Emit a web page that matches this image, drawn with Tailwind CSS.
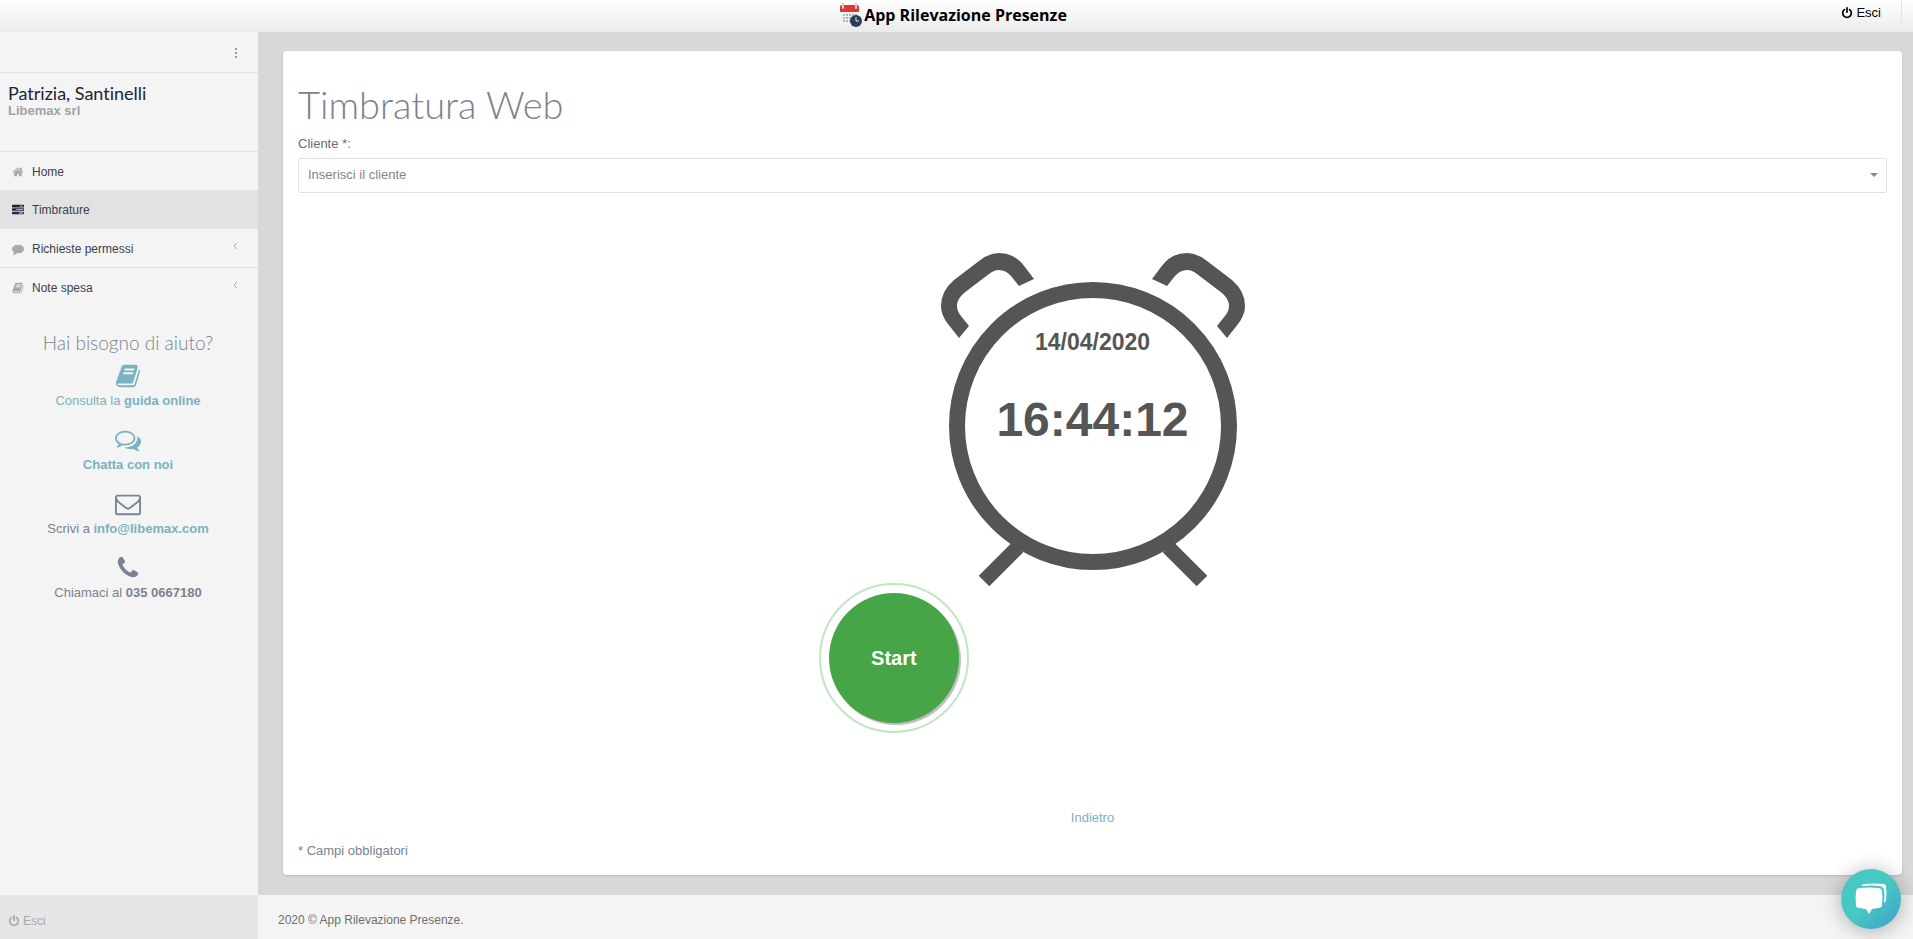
<!DOCTYPE html>
<html lang="it">

<head>
    <meta charset="UTF-8">
    <meta name="viewport" content="width=device-width, initial-scale=1">
    <title>App Rilevazione Presenze</title>
    <script src="https://cdn.jsdelivr.net/npm/@tailwindcss/browser@4"></script>
</head>

<body class="min-h-screen flex flex-col bg-[#d8d8d8] font-['Liberation_Sans',Arial,sans-serif] text-[13px] leading-5 text-[#7b8291]">

    <!-- Icons -->
    <svg class="hidden">
        <symbol id="home" viewBox="0 0 1792 1792"><path d="M1472 992v480q0 26-19 45t-45 19h-384v-384h-256v384h-384q-26 0-45-19t-19-45v-480q0-1 .5-3t.5-3l575-474 575 474q1 2 1 6zm223-69l-62 74q-8 9-21 11h-3q-13 0-21-7l-692-577-692 577q-12 8-24 7-13-2-21-11l-62-74q-8-10-7-23.5t11-21.5l719-599q32-26 76-26t76 26l244 204v-195q0-14 9-23t23-9h192q14 0 23 9t9 23v408l219 182q10 8 11 21.5t-7 23.5z"/></symbol>
        <symbol id="tasks" viewBox="0 0 1792 1792"><path fill-rule="evenodd" d="M64 128h1664q64 0 64 64v256q0 64-64 64H64q-64 0-64-64V192q0-64 64-64zM1152 256v128h512V256zM64 640h1664q64 0 64 64v256q0 64-64 64H64q-64 0-64-64V704q0-64 64-64zM640 768v128h1024V768zM64 1152h1664q64 0 64 64v256q0 64-64 64H64q-64 0-64-64v-256q0-64 64-64zM1024 1280v128h640v-128z"/></symbol>
        <symbol id="comment" viewBox="0 0 1792 1792"><path d="M1792 896q0 174-120 321.5t-326 233-450 85.5q-70 0-145-8-198 175-460 242-49 14-114 22-17 2-30.5-9t-17.5-29v-1q-3-4-.5-12t2-10 4.5-9.5l6-9 7-8.5 8-9q7-8 31-34.5t34.5-38 31-39.5 32.5-51 27-59 26-76q-157-89-247.5-220t-90.5-281q0-130 71-248.5t191-204.5 286-136.5 348-50.5q244 0 450 85.5t326 233 120 321.5z"/></symbol>
        <symbol id="book" viewBox="0 0 1792 1792"><path d="M1703 478q40 57 18 129l-275 906q-19 64-76.5 107.5t-122.5 43.5h-923q-77 0-148.5-53.5t-99.5-131.5q-24-67-2-127 0-4 3-27t4-37q1-8-3-21.5t-3-19.5q2-11 8-21t16.5-23.5 16.5-23.5q23-38 45-91.5t30-91.5q3-10 .5-30t-.5-28q3-11 17-28t17-23q21-36 42-92t25-90q1-9-2.5-32t.5-28q4-13 22-30.5t22-22.5q19-26 42.5-84.5t27.5-96.5q1-8-3-25.5t-2-26.5q2-8 9-18t18-23 17-21q8-12 16.5-30.5t15-35 16-36 19.5-32 26.5-23.5 36-11.5 47.5 5.5l-1 3q38-9 51-9h761q74 0 114 56t18 130l-274 906q-36 119-71.5 153.5t-128.5 34.5h-869q-27 0-38 15-11 16-1 43 24 70 144 70h923q29 0 56-15.5t35-41.5l300-987q7-22 5-57 38 15 59 43zm-1064 2q-4 13 2 22.5t20 9.5h608q13 0 25.5-9.5t16.5-22.5l21-64q4-13-2-22.5t-20-9.5h-608q-13 0-25.5 9.5t-16.5 22.5zm-83 256q-4 13 2 22.5t20 9.5h608q13 0 25.5-9.5t16.5-22.5l21-64q4-13-2-22.5t-20-9.5h-608q-13 0-25.5 9.5t-16.5 22.5z"/></symbol>
        <symbol id="comments" viewBox="0 0 1792 1792"><path d="M704 384q-153 0-286 52t-211.5 141-78.5 191q0 82 53 158t149 132l97 56-35 84q34-20 62-39l44-31 53 10q78 14 153 14 153 0 286-52t211.5-141 78.5-191-78.5-191-211.5-141-286-52zm0-128q191 0 353.5 68.5t256.5 186.5 94 257-94 257-256.5 186.5-353.5 68.5q-86 0-176-16-124 88-278 128-36 9-86 16h-3q-11 0-20.5-8t-11.5-21q-1-3-1-6.5t.5-6.5 2-6l2.5-5 3.5-5.5 4-5 4.5-5 4-4.5q5-6 23-25t26-29.5 22.5-29 25-38.5 20.5-44q-124-72-195-177t-71-224q0-139 94-257t256.5-186.5 353.5-68.5zm822 1169q10 24 20.5 44t25 38.5 22.5 29 26 29.5 23 25q1 1 4 4.5t4.5 5 4 5 3.5 5.5l2.5 5 2 6 .5 6.5-1 6.5q-3 14-13 22t-22 7q-50-7-86-16-154-40-278-128-90 16-176 16-271 0-472-132 58 4 88 4 161 0 309-45t264-129q125-92 192-212t67-254q0-77-23-152 129 71 204 178t75 230q0 120-71 224.5t-195 176.5z"/></symbol>
        <symbol id="envelope" viewBox="0 0 1792 1792"><path d="M1664 1504v-768q-32 36-69 66-268 206-426 338-51 43-83 67t-86.5 48.5-102.5 24.5h-2q-48 0-102.5-24.5t-86.5-48.5-83-67q-158-132-426-338-37-30-69-66v768q0 13 9.5 22.5t22.5 9.5h1472q13 0 22.5-9.5t9.5-22.5zm0-1051v-24.5l-.5-13-3-12.5-5.5-9-9-7.5-14-2.5h-1472q-13 0-22.5 9.5t-9.5 22.5q0 168 147 284 193 152 401 317 6 5 35 29.5t46 37.5 44.5 31.5 50.5 27.5 43 9h2q20 0 43-9t50.5-27.5 44.5-31.5 46-37.5 35-29.5q208-165 401-317 54-43 100.5-115.5t46.5-131.5zm128-37v1088q0 66-47 113t-113 47h-1472q-66 0-113-47t-47-113v-1088q0-66 47-113t113-47h1472q66 0 113 47t47 113z"/></symbol>
        <symbol id="phone" viewBox="0 0 1792 1792"><path d="M1600 1240q0 27-10 70.5t-21 68.5q-21 50-122 106-94 51-186 51-27 0-53-3.5t-57.5-12.5-47-14.5-55.5-20.5-49-18q-98-35-175-83-127-79-264-216t-216-264q-48-77-83-175-3-9-18-49t-20.5-55.5-14.5-47-12.5-57.5-3.5-53q0-92 51-186 56-101 106-122 25-11 68.5-21t70.5-10q14 0 21 3 18 6 53 76 11 19 30 54t35 63.5 31 53.5q3 4 17.5 25t21.5 35.5 7 28.5q0 20-28.5 50t-62 55-62 53-28.5 46q0 9 5 22.5t8.5 20.5 14 24 11.5 19q76 137 174 235t235 174q2 1 19 11.5t24 14 20.5 8.5 22.5 5q18 0 46-28.5t53-62 55-62 50-28.5q14 0 28.5 7t35.5 21.5 25 17.5q25 15 53.5 31t63.5 35 54 30q70 35 76 53 3 7 3 21z"/></symbol>
        <symbol id="power" viewBox="0 0 1792 1792"><path d="M1664 896q0 156-61 298t-164 245-245 164-298 61-298-61-245-164-164-245-61-298q0-182 80.5-343t226.5-270q43-32 95.5-25t83.5 50q32 42 24.5 94.5t-49.5 84.5q-98 74-151.5 181t-53.5 228q0 104 40.5 198.5t109.5 163.5 163.5 109.5 198.5 40.5 198.5-40.5 163.5-109.5 109.5-163.5 40.5-198.5q0-121-53.5-228t-151.5-181q-42-32-49.5-84.5t24.5-94.5q31-43 84-50t95 25q146 109 226.5 270t80.5 343zm-640-768v640q0 52-38 90t-90 38-90-38-38-90v-640q0-52 38-90t90-38 90 38 38 90z"/></symbol>
        <symbol id="angle" viewBox="0 0 6 8"><path d="M5 1L2 4l3 3" fill="none" stroke="currentColor"/></symbol>
    </svg>

    <header class="h-8 grid grid-cols-[1fr_auto_1fr] items-start bg-linear-to-b from-white to-[#ebebeb] text-black">
        <div></div>
        <div class="flex items-center pt-[3px] pr-2 gap-[2px]">
            <svg class="size-6" viewBox="0 0 24 24">
                <path d="M2 5h19v17H4q-2 0-2-2z" fill="#f1f2f2"/>
                <path d="M2 4q0-2 2-2h15q2 0 2 2v5H2z" fill="#e0392f"/>
                <path d="M5 0v5M18 0v5" stroke="#c9d3d8" stroke-width="2" stroke-linecap="round"/>
                <path d="M5 12h14M5 15h14M5 18h10" stroke="#aeb4ba" stroke-width="2" stroke-dasharray="2 1"/>
                <circle cx="18" cy="18" r="6" fill="#2c3e55"/>
                <path d="M18 14v4h3" stroke="#dfe6ea" fill="none"/>
            </svg>
            <span class="font-['Open_Sans',sans-serif] font-bold text-base leading-5">App Rilevazione Presenze</span>
        </div>
        <div class="flex justify-end">
            <a href="#" class="flex items-center gap-[3px] pr-5 mr-[11px] h-[26px] border-r border-[#e4e4e4]">
                <svg class="size-3" fill="currentColor"><use href="#power"/></svg>
                Esci
            </a>
        </div>
    </header>

    <div class="flex-1 flex">
        <aside class="w-[258px] shrink-0 flex flex-col bg-[#f4f4f4]">
            <div class="h-[41px] flex items-center justify-end pr-[21px] pt-[2px] border-b border-[#e2e2e2]">
                <button type="button" aria-label="Menu" class="flex flex-col gap-[2px]">
                    <span class="size-[2px] bg-[#999]"></span>
                    <span class="size-[2px] bg-[#999]"></span>
                    <span class="size-[2px] bg-[#999]"></span>
                </button>
            </div>
            <div class="h-[79px] px-2 pt-[10px] border-b border-[#e2e2e2]">
                <h2 class="font-[Lato,sans-serif] text-lg leading-5 text-[#22233a] [font-variant-ligatures:none]">Patrizia, Santinelli</h2>
                <p class="font-bold leading-4 text-[#a1a1a1]">Libemax srl</p>
            </div>

            <nav class="text-xs text-[#3c3f4e]">
                <a href="#" class="h-[38px] flex items-center gap-2 px-3 pt-[2px]">
                    <svg class="size-3 text-[#a9a9a9]" fill="currentColor"><use href="#home"/></svg>
                    Home
                </a>
                <a href="#" class="h-[39px] flex items-center gap-2 px-3 bg-[#e2e2e2]">
                    <svg class="size-3 text-[#22233a]" fill="currentColor"><use href="#tasks"/></svg>
                    Timbrature
                </a>
                <a href="#" class="h-[39px] flex items-center gap-2 px-3 pt-[2px] border-b border-[#e2e2e2]">
                    <svg class="size-3 text-[#a9a9a9]" fill="currentColor"><use href="#comment"/></svg>
                    Richieste permessi
                    <svg class="w-[6px] h-2 ml-auto mr-2 mb-[6px] text-[#a9a9a9]"><use href="#angle"/></svg>
                </a>
                <a href="#" class="h-[39px] flex items-center gap-2 px-3">
                    <svg class="size-3 text-[#a9a9a9]" fill="currentColor"><use href="#book"/></svg>
                    Note spesa
                    <svg class="w-[6px] h-2 ml-auto mr-2 mb-[6px] text-[#a9a9a9]"><use href="#angle"/></svg>
                </a>
            </nav>

            <div class="flex flex-col items-center pt-[26px] pr-[2px] text-center">
                <h3 class="font-[Lato,sans-serif] font-light text-[19px] leading-5">Hai bisogno di aiuto?</h3>
                <div class="flex flex-col gap-4 pt-[10px]">
                    <a href="#" class="flex flex-col items-center gap-[2px] text-[#7cb1c0]">
                        <svg class="size-[26px]" fill="currentColor"><use href="#book"/></svg>
                        <span>Consulta la <b>guida online</b></span>
                    </a>
                    <a href="#" class="flex flex-col items-center gap-[2px] text-[#7cb1c0]">
                        <svg class="size-[26px]" fill="currentColor"><use href="#comments"/></svg>
                        <b>Chatta con noi</b>
                    </a>
                    <div class="flex flex-col items-center gap-[2px]">
                        <svg class="size-[26px]" fill="currentColor"><use href="#envelope"/></svg>
                        <span>Scrivi a <a href="mailto:info@libemax.com" class="font-bold text-[#7cb1c0]">info@libemax.com</a></span>
                    </div>
                    <div class="flex flex-col items-center gap-[2px]">
                        <svg class="size-[26px]" fill="currentColor"><use href="#phone"/></svg>
                        <span>Chiamaci al <b>035 0667180</b></span>
                    </div>
                </div>
            </div>

            <div class="mt-auto h-11 flex items-center px-2 pt-2 bg-[#e6e6e6] text-xs text-[#a9a9a9]">
                <a href="#" class="flex items-center gap-[3px]">
                    <svg class="size-3" fill="currentColor"><use href="#power"/></svg>
                    Esci
                </a>
            </div>
        </aside>

        <div class="flex-1 flex flex-col">
            <main class="flex-1 flex flex-col mt-[19px] mb-5 ml-[25px] mr-[11px] px-[15px] bg-white rounded-sm shadow-sm">
                <h1 class="pt-[31px] font-[Lato,sans-serif] font-light text-[38px] leading-11">Timbratura Web</h1>
                <form class="flex-1 flex flex-col">
                    <label for="cliente" class="pt-2 text-[#686b73]">Cliente *:</label>
                    <div class="relative mt-1">
                        <select id="cliente" name="cliente" class="appearance-none w-full h-[35px] pl-[9px] pr-8 pb-[2px] bg-white border border-[#e0e0e0] rounded-xs text-[#858585]">
                            <option>Inserisci il cliente</option>
                        </select>
                        <svg class="absolute right-[9px] top-[15px] w-2 h-1 pointer-events-none" viewBox="0 0 8 4"><path d="M0 0h8L4 4z" fill="#888"/></svg>
                    </div>

                    <!-- Clock -->
                    <div class="relative self-center mt-[61px] w-[304px] h-[332px] text-[#555] text-center font-bold">
                        <svg class="absolute inset-0 overflow-visible" viewBox="0 0 304 332" fill="#555">
                            <circle cx="152" cy="172" r="136" fill="none" stroke="#555" stroke-width="16"/>
                            <path id="bell" d="M93 25L84 13Q74-1 58-1Q48-1 38 7L13 26Q0 37 0 52Q0 61 7 70L18 84L28 72L20 62Q16 57 16 52Q16 45 23 39L48 20Q53 16 58 16Q65 16 70 22L78 32Z"/>
                            <use href="#bell" transform="translate(304 0) scale(-1 1)"/>
                            <path d="M77 293L43 327M227 293L261 327" stroke="#555" stroke-width="15"/>
                        </svg>
                        <div class="relative pt-[76px] text-[23px] leading-6">14/04/2020</div>
                        <div class="relative pt-[42px] text-5xl">16:44:12</div>
                    </div>

                    <div class="w-3/4 flex justify-center">
                        <div class="-mt-[3px] p-2 rounded-full border-2 border-[#c1e6c1]">
                            <button type="button" class="size-[130px] rounded-full bg-[#46a546] text-white text-xl font-bold shadow-[2px_2px_1px_#bbb]">Start</button>
                        </div>
                    </div>

                    <a href="#" class="self-center mt-auto text-[#7cb1c0]">Indietro</a>
                    <p class="pt-[13px] pb-[14px]">* Campi obbligatori</p>
                </form>
            </main>
            <footer class="h-11 flex items-center justify-between pl-5 pr-6 pt-[6px] bg-[#f4f4f4] text-xs text-[#6f6f6f]">
                2020 © App Rilevazione Presenze.
                <a href="#" aria-label="Torna su">
                    <svg class="w-2 h-[6px]" viewBox="0 0 8 6"><path d="M1 5l3-4 3 4" fill="none" stroke="#555" stroke-width="2"/></svg>
                </a>
            </footer>
        </div>
    </div>

    <button type="button" aria-label="Chat" class="fixed right-3 bottom-[10px] size-15 rounded-full flex items-center justify-center bg-linear-to-br from-[#48c8c2] from-50% to-[#3e9fca] shadow-[0_2px_20px_rgba(0,0,0,0.3)]">
        <svg class="size-8" viewBox="0 0 32 32" fill="#fff">
            <path d="M5 5Q14 4 23 5Q27 5 27 9Q28 15 27 22Q27 25 23 25L17 26L14 31L11 26L4 25Q1 25 1 22Q0 15 1 9Q1 5 5 5Z"/>
            <path d="M6 3Q7 1 10 1Q20 0 28 1Q31 1 31 4Q32 10 31 17Q31 19 29 20Q30 13 29 7Q29 4 25 3Q16 2 6 3Z"/>
        </svg>
    </button>
</body>

</html>
